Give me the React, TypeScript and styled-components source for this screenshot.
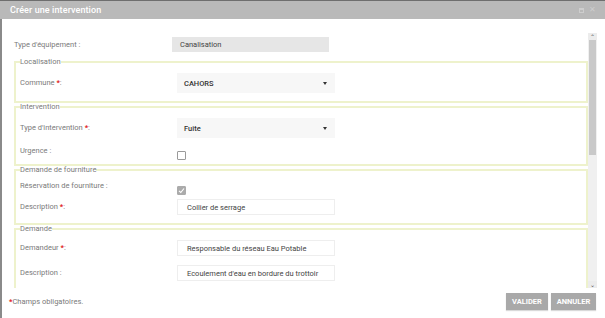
import React from 'react';
import styled, { createGlobalStyle } from 'styled-components';

const GlobalStyle = createGlobalStyle`
  html, body {
    margin: 0;
    padding: 0;
    background: #ffffff;
    font-family: Roboto, "Liberation Sans", Arial, sans-serif;
    overflow: hidden;
  }
  * { box-sizing: border-box; }
`;

const Dialog = styled.div`
  width: 605px;
  height: 318px;
  display: flex;
  flex-direction: column;
  border-top: 1px solid #6e6e6e;
`;

const Header = styled.div`
  height: 18px;
  flex: none;
  display: flex;
  align-items: center;
  padding: 0 9px 0 10px;
  background: #b9b9b9;
`;

const Title = styled.div`
  font-size: 9px;
  font-weight: 500;
  color: #ffffff;
  letter-spacing: 0.1px;
`;

const HeaderTools = styled.div`
  margin-left: auto;
  display: flex;
  align-items: center;
  gap: 5px;
`;

const MaxIcon = styled.span`
  width: 5px;
  height: 5px;
  border: 1px solid #cdcdcd;
  border-top-width: 2px;
`;

const CloseIcon = styled.span`
  font-size: 8px;
  line-height: 8px;
  color: #cdcdcd;
`;

const Body = styled.div`
  flex: 1;
  display: flex;
  flex-direction: column;
  border-left: 2px solid #8a8a8a;
  padding-top: 13px;
`;

const ScrollArea = styled.div`
  height: 256px;
  flex: none;
  display: flex;
  padding: 0 8px 0 10px;
`;

const Content = styled.div`
  flex: 1;
  overflow: hidden;
  padding: 5px 0 0 2px;
`;

const Scrollbar = styled.div`
  width: 9px;
  margin-top: 1px;
  display: flex;
  flex-direction: column;
  background: #f0f0f0;
`;

const ScrollButton = styled.div`
  height: 7px;
  flex: none;
  display: flex;
  align-items: center;
  justify-content: center;
  background: #ececec;
  color: #555;
  font-size: 6px;
  line-height: 7px;
`;

const ScrollThumb = styled.div`
  height: 115px;
  flex: none;
  background: #c9c9c9;
  margin: 0 1px;
`;

const ScrollTrack = styled.div`
  flex: 1;
`;

const Fieldset = styled.fieldset<{ $mt?: number; $pb?: number }>`
  margin: ${({ $mt }) => $mt ?? 0}px 0 0 0;
  padding: 0 4px ${({ $pb }) => $pb ?? 8}px;
  border: 2px solid #eef2cc;
  min-width: 0;
`;

const Legend = styled.legend`
  padding: 0;
  font-size: 7.5px;
  line-height: 8px;
  color: #7a7a7a;
`;

const Row = styled.div<{ $mt?: number; $label?: number; $top?: boolean }>`
  display: grid;
  grid-template-columns: ${({ $label }) => $label ?? 157}px 158px;
  align-items: ${({ $top }) => ($top ? 'start' : 'center')};
  margin-top: ${({ $mt }) => $mt ?? 0}px;
`;

const Label = styled.div`
  font-size: 7.5px;
  line-height: 12px;
  color: #7a7a7a;
  white-space: nowrap;
`;

const Star = styled.span`
  color: #e02020;
  font-weight: 700;
`;

const ReadOnly = styled.div`
  width: 157px;
  height: 15px;
  display: flex;
  align-items: center;
  padding-left: 8px;
  background: #e6e6e6;
  font-size: 7.5px;
  color: #444;
`;

const Select = styled.div`
  height: 20px;
  display: flex;
  align-items: center;
  padding: 0 8px 0 7px;
  background: #f7f7f7;
  font-size: 7.5px;
  font-weight: 500;
  color: #333;
`;

const Caret = styled.span`
  margin-left: auto;
  width: 0;
  height: 0;
  border-left: 2.5px solid transparent;
  border-right: 2.5px solid transparent;
  border-top: 3px solid #333;
`;

const TextInput = styled.div`
  height: 16px;
  display: flex;
  align-items: center;
  padding-left: 9px;
  background: #ffffff;
  border: 1px solid #eeeeee;
  font-size: 7.5px;
  color: #444;
`;

const Checkbox = styled.span<{ $checked?: boolean; $mt: number }>`
  width: 9px;
  height: 9px;
  margin-top: ${({ $mt }) => $mt}px;
  display: flex;
  align-items: center;
  justify-content: center;
  border: 1px solid ${({ $checked }) => ($checked ? '#ababab' : '#9a9a9a')};
  border-radius: 1px;
  background: ${({ $checked }) => ($checked ? '#ababab' : '#ffffff')};
`;

const Footer = styled.div`
  flex: 1;
  display: flex;
  align-items: flex-start;
  padding: 5px 9px 0 7px;
`;

const Note = styled.div`
  margin-top: 3px;
  font-size: 7.5px;
  line-height: 12px;
  color: #7a7a7a;
  white-space: nowrap;
`;

const Actions = styled.div`
  margin-left: auto;
  display: flex;
  gap: 3px;
`;

const Button = styled.button<{ $w: number }>`
  width: ${({ $w }) => $w}px;
  height: 17px;
  padding: 0;
  border: none;
  background: #a9a9a9;
  box-shadow: 0 1px 1px rgba(0, 0, 0, 0.15);
  color: #ffffff;
  font-family: Roboto, "Liberation Sans", Arial, sans-serif;
  font-size: 7.5px;
  font-weight: 700;
`;

const Check = () => (
  <svg width="7" height="7" viewBox="0 0 7 7">
    <path d="M1 3.8 L2.8 5.5 L6 1.5" fill="none" stroke="#ffffff" strokeWidth="1.1" />
  </svg>
);

const Required: React.FC<{ text: string }> = ({ text }) => (
  <Label>
    {text} <Star>*</Star>:
  </Label>
);

const App: React.FC = () => (
  <>
    <GlobalStyle />
    <Dialog>
      <Header>
        <Title>Créer une intervention</Title>
        <HeaderTools>
          <MaxIcon />
          <CloseIcon>✕</CloseIcon>
        </HeaderTools>
      </Header>
      <Body>
        <ScrollArea>
          <Content>
            <Row $label={158}>
              <Label>Type d'équipement :</Label>
              <ReadOnly>Canalisation</ReadOnly>
            </Row>

            <Fieldset $mt={6}>
              <Legend>Localisation</Legend>
              <Row $mt={7}>
                <Required text="Commune" />
                <Select>
                  CAHORS
                  <Caret />
                </Select>
              </Row>
            </Fieldset>

            <Fieldset $pb={4}>
              <Legend>Intervention</Legend>
              <Row $mt={7}>
                <Required text="Type d'intervention" />
                <Select>
                  Fuite
                  <Caret />
                </Select>
              </Row>
              <Row $mt={7} $top>
                <Label>Urgence :</Label>
                <Checkbox $mt={6} />
              </Row>
            </Fieldset>

            <Fieldset>
              <Legend>Demande de fourniture</Legend>
              <Row $mt={6} $top>
                <Label>Réservation de fourniture :</Label>
                <Checkbox $checked $mt={6}>
                  <Check />
                </Checkbox>
              </Row>
              <Row $mt={4}>
                <Required text="Description" />
                <TextInput>Collier de serrage</TextInput>
              </Row>
            </Fieldset>

            <Fieldset $pb={12}>
              <Legend>Demande</Legend>
              <Row $mt={7}>
                <Required text="Demandeur" />
                <TextInput>Responsable du réseau Eau Potable</TextInput>
              </Row>
              <Row $mt={9}>
                <Label>Description :</Label>
                <TextInput>Ecoulement d'eau en bordure du trottoir</TextInput>
              </Row>
            </Fieldset>
          </Content>
          <Scrollbar>
            <ScrollButton>⌃</ScrollButton>
            <ScrollThumb />
            <ScrollTrack />
            <ScrollButton>⌄</ScrollButton>
          </Scrollbar>
        </ScrollArea>
        <Footer>
          <Note>
            <Star>*</Star>Champs obligatoires.
          </Note>
          <Actions>
            <Button $w={42}>VALIDER</Button>
            <Button $w={45}>ANNULER</Button>
          </Actions>
        </Footer>
      </Body>
    </Dialog>
  </>
);

export default App;
